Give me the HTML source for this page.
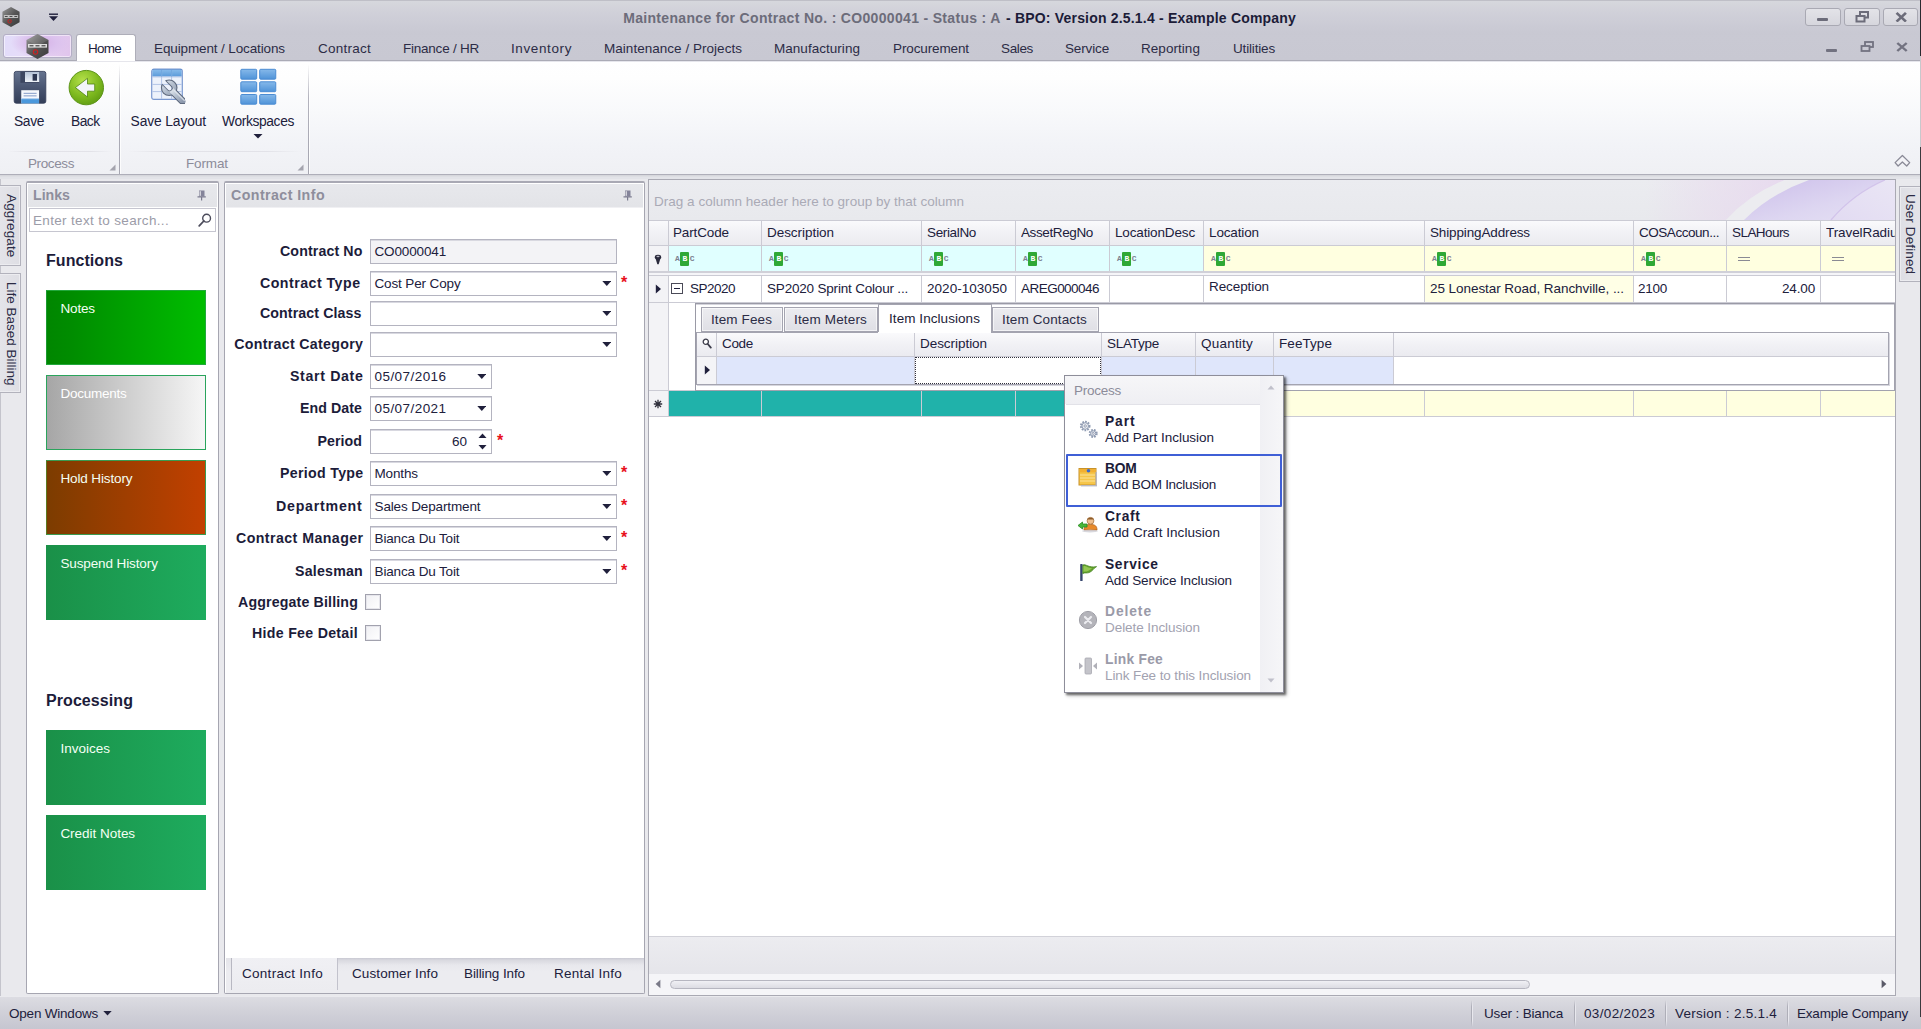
<!DOCTYPE html>
<html lang="en"><head><meta charset="utf-8"><title>Maintenance for Contract No. : CO0000041</title>
<style>
html,body{margin:0;padding:0;}
body{width:1921px;height:1029px;overflow:hidden;position:relative;background:#dfdfe5;font-family:"Liberation Sans", sans-serif;font-size:13.5px;color:#20203c;}
#app{position:absolute;left:0;top:0;width:1921px;height:1029px;overflow:hidden;}
#app div,#app svg{position:absolute;}
#app div.t{white-space:pre;}
#app span{position:static;}
</style></head><body><div id="app">
<div style="left:0px;top:0px;width:1921px;height:1029px;background:#e9e9ed;"></div>
<div style="left:0px;top:61px;width:1px;height:968px;background:#c4c4cc;"></div>
<div style="left:0px;top:0px;width:1921px;height:36px;background:linear-gradient(#d7d8dd 0,#d0d0d9 35%,#cacad4 80%,#c8c8d2 100%);"></div>
<div style="left:0px;top:0px;width:1921px;height:1px;background:#bfbfc7;"></div>
<div style="left:0px;top:35px;width:1921px;height:26px;background:linear-gradient(#c9c9d3,#c8c8d2);"></div>
<svg style="left:0.9px;top:6.2px" width="20" height="22" viewBox="0 0 21 23"><defs><linearGradient id="hx" x1="0" y1="0" x2="1" y2="1"><stop offset="0" stop-color="#9a9a9a"/><stop offset=".5" stop-color="#565656"/><stop offset="1" stop-color="#3a3a3a"/></linearGradient></defs><polygon points="10.5,1 19.5,6 19.5,17 10.5,22 1.5,17 1.5,6" fill="url(#hx)"/><rect x="3" y="9.5" width="15" height="3" fill="#d8d8d8" opacity=".85"/><rect x="4" y="10.5" width="3" height="1" fill="#444"/><rect x="9" y="10.5" width="3" height="1" fill="#444"/><rect x="14" y="10.5" width="3" height="1" fill="#444"/><circle cx="9" cy="16" r="1.8" fill="none" stroke="#d02020" stroke-width="1"/></svg>
<svg style="left:48px;top:13px" width="11" height="9" viewBox="0 0 11 9"><rect x="1" y="0.5" width="9" height="1.4" fill="#20203c"/><polygon points="1,3.2 10,3.2 5.5,8" fill="#20203c"/></svg>
<div class="t" style="top:7.699999999999999px;font-size:14px;line-height:20px;color:#6c6c7a;letter-spacing:0.322px;font-weight:bold;left:623.2px;">Maintenance for Contract No. : CO0000041 - Status : A</div>
<div class="t" style="top:7.699999999999999px;font-size:14px;line-height:20px;color:#1c1c38;letter-spacing:0.189px;font-weight:bold;left:1006px;">- BPO: Version 2.5.1.4 - Example Company</div>
<div style="left:1805px;top:8px;width:36px;height:18px;box-sizing:border-box;border:1px solid #a9a9b3;border-radius:3px;background:linear-gradient(#e3e3e8,#d6d6dd);"></div>
<div style="left:1844px;top:8px;width:36px;height:18px;box-sizing:border-box;border:1px solid #a9a9b3;border-radius:3px;background:linear-gradient(#e3e3e8,#d6d6dd);"></div>
<div style="left:1883px;top:8px;width:35px;height:18px;box-sizing:border-box;border:1px solid #a9a9b3;border-radius:3px;background:linear-gradient(#e3e3e8,#d6d6dd);"></div>
<div style="left:1817px;top:18px;width:11px;height:3px;background:#6c6c7a;border-radius:1px"></div>
<svg style="left:1854.5px;top:11px" width="15" height="12" viewBox="0 0 15 12"><rect x="5" y="1" width="8" height="5.5" fill="none" stroke="#6c6c7a" stroke-width="2"/><rect x="1.5" y="5" width="8" height="5.5" fill="#dcdce2" stroke="#6c6c7a" stroke-width="2"/></svg>
<svg style="left:1894.5px;top:11.5px" width="12.5" height="10.5" preserveAspectRatio="none" viewBox="0 0 12 11"><path d="M1.5 1 L10.5 10 M10.5 1 L1.5 10" stroke="#6c6c7a" stroke-width="2.6"/></svg>
<div style="left:1826px;top:49px;width:11px;height:2.5px;background:#727280;border-radius:1px"></div>
<svg style="left:1860px;top:41px" width="15" height="12" viewBox="0 0 15 12"><rect x="5" y="1" width="8" height="5" fill="none" stroke="#727280" stroke-width="1.8"/><rect x="1.5" y="5" width="8" height="5" fill="#c9c9d3" stroke="#727280" stroke-width="1.8"/></svg>
<svg style="left:1896px;top:42px" width="12" height="10" viewBox="0 0 11 10" preserveAspectRatio="none"><path d="M1.2 1 L9.8 9 M9.8 1 L1.2 9" stroke="#727280" stroke-width="2.3"/></svg>
<div style="left:3px;top:34px;width:69px;height:24px;box-sizing:border-box;border:1px solid #b4aec6;border-radius:3px;background:radial-gradient(ellipse 60% 90% at 55% 35%,#d6b2e6 0,#dcc2ee 40%,rgba(222,204,242,0) 75%),linear-gradient(100deg,#e2dcfa 0,#e6dcf8 30%,#e4cdf0 70%,#e0c4ec 100%);box-shadow:inset 0 0 0 1px rgba(255,255,255,.5);"></div>
<svg style="left:25px;top:32.5px" width="25" height="27" viewBox="0 0 25 27"><polygon points="12.5,1 23.5,7 23.5,20 12.5,26 1.5,20 1.5,7" fill="url(#hx)"/><polygon points="12.5,1 23.5,7 12.5,13 1.5,7" fill="#fff" opacity=".12"/><rect x="3" y="11" width="19" height="3.6" fill="#ececec" opacity=".92"/><rect x="4.5" y="12.2" width="4" height="1.2" fill="#444"/><rect x="10.5" y="12.2" width="4" height="1.2" fill="#444"/><rect x="16.5" y="12.2" width="4" height="1.2" fill="#444"/><circle cx="10.5" cy="19" r="2.2" fill="none" stroke="#d02020" stroke-width="1.1"/></svg>
<div style="left:0px;top:61px;width:1921px;height:113px;background:linear-gradient(#ffffff 0,#fefefe 15%,#f8f9fb 45%,#f2f3f7 75%,#eff0f4 100%);"></div>
<div style="left:0px;top:174px;width:1921px;height:1px;background:#aeaeb9;"></div>
<div style="left:0px;top:175px;width:1921px;height:1px;background:#d6d7dc;"></div>
<div style="left:0px;top:176px;width:1921px;height:1px;background:#dddee3;"></div>
<div style="left:0px;top:177px;width:1921px;height:2px;background:#e2e3e8;"></div>
<div style="left:0px;top:60px;width:1921px;height:1px;background:#ababb6;"></div>
<div style="left:0px;top:61px;width:1921px;height:1px;background:#e6e6ec;"></div>
<div style="left:76px;top:34px;width:60px;height:27px;box-sizing:border-box;border:1px solid #aeaeb9;border-bottom:none;border-radius:3px 3px 0 0;background:#fff;"></div>
<div class="t" style="top:38.5px;font-size:13.5px;line-height:20px;color:#1e1e3c;letter-spacing:-0.754px;left:88px;">Home</div>
<div class="t" style="top:38.5px;font-size:13.5px;line-height:20px;color:#2c2c46;letter-spacing:-0.124px;left:154px;">Equipment / Locations</div>
<div class="t" style="top:38.5px;font-size:13.5px;line-height:20px;color:#2c2c46;letter-spacing:0.246px;left:318px;">Contract</div>
<div class="t" style="top:38.5px;font-size:13.5px;line-height:20px;color:#2c2c46;letter-spacing:-0.232px;left:403px;">Finance / HR</div>
<div class="t" style="top:38.5px;font-size:13.5px;line-height:20px;color:#2c2c46;letter-spacing:0.608px;left:511px;">Inventory</div>
<div class="t" style="top:38.5px;font-size:13.5px;line-height:20px;color:#2c2c46;letter-spacing:0.031px;left:604px;">Maintenance / Projects</div>
<div class="t" style="top:38.5px;font-size:13.5px;line-height:20px;color:#2c2c46;letter-spacing:0.034px;left:774px;">Manufacturing</div>
<div class="t" style="top:38.5px;font-size:13.5px;line-height:20px;color:#2c2c46;letter-spacing:-0.118px;left:893px;">Procurement</div>
<div class="t" style="top:38.5px;font-size:13.5px;line-height:20px;color:#2c2c46;letter-spacing:-0.356px;left:1001px;">Sales</div>
<div class="t" style="top:38.5px;font-size:13.5px;line-height:20px;color:#2c2c46;letter-spacing:-0.145px;left:1065px;">Service</div>
<div class="t" style="top:38.5px;font-size:13.5px;line-height:20px;color:#2c2c46;letter-spacing:0.05px;left:1141px;">Reporting</div>
<div class="t" style="top:38.5px;font-size:13.5px;line-height:20px;color:#2c2c46;letter-spacing:-0.168px;left:1233px;">Utilities</div>
<div style="left:119px;top:64px;width:1px;height:110px;background:linear-gradient(rgba(190,190,200,0),#b4b4be 30%,#aaaab5 70%,#a6a6b1);"></div>
<div style="left:120px;top:64px;width:1px;height:110px;background:rgba(255,255,255,.8);"></div>
<div style="left:308px;top:64px;width:1px;height:110px;background:linear-gradient(rgba(190,190,200,0),#b4b4be 30%,#aaaab5 70%,#a6a6b1);"></div>
<div style="left:309px;top:64px;width:1px;height:110px;background:rgba(255,255,255,.8);"></div>
<div style="left:8px;top:151px;width:104px;height:1px;background:linear-gradient(90deg,rgba(220,220,228,0),#e2e2e8 20%,#e2e2e8 80%,rgba(220,220,228,0));"></div>
<div style="left:128px;top:151px;width:174px;height:1px;background:linear-gradient(90deg,rgba(220,220,228,0),#e2e2e8 20%,#e2e2e8 80%,rgba(220,220,228,0));"></div>
<div class="t" style="top:153.5px;font-size:13.5px;line-height:20px;color:#8c8c9a;letter-spacing:-0.397px;left:28px;">Process</div>
<div class="t" style="top:153.5px;font-size:13.5px;line-height:20px;color:#8c8c9a;letter-spacing:-0.128px;left:186px;">Format</div>
<svg style="left:109px;top:164px" width="7" height="7" viewBox="0 0 7 7"><polygon points="6.5,0.5 6.5,6.5 0.5,6.5" fill="#a4a4ae"/></svg>
<svg style="left:297px;top:164px" width="7" height="7" viewBox="0 0 7 7"><polygon points="6.5,0.5 6.5,6.5 0.5,6.5" fill="#a4a4ae"/></svg>
<div class="t" style="top:111.5px;font-size:13.8px;line-height:20px;color:#20203c;letter-spacing:-0.363px;left:-271px;width:600px;text-align:center;">Save</div>
<div class="t" style="top:111.5px;font-size:13.8px;line-height:20px;color:#20203c;letter-spacing:-0.547px;left:-214.7px;width:600px;text-align:center;">Back</div>
<div class="t" style="top:111.5px;font-size:13.8px;line-height:20px;color:#20203c;letter-spacing:-0.111px;left:-131.7px;width:600px;text-align:center;">Save Layout</div>
<div class="t" style="top:111.5px;font-size:13.8px;line-height:20px;color:#20203c;letter-spacing:-0.366px;left:-42px;width:600px;text-align:center;">Workspaces</div>
<svg style="left:253px;top:134px" width="10" height="5" viewBox="0 0 10 5"><polygon points="0.5,0 9.5,0 5,4.6" fill="#20203c"/></svg>
<svg style="left:1894px;top:154px" width="18" height="14" viewBox="0 0 18 14"><path d="M8.4 1.5 L15.7 8.6 L12.7 12 L8.4 8 L4.1 12 L1.1 8.6 Z" fill="#f3f3f7" stroke="#8a8a97" stroke-width="1.3" stroke-linejoin="round"/></svg>
<svg style="left:13px;top:70px" width="34" height="35" viewBox="0 0 34 35">
<defs><linearGradient id="sv" x1="0" y1="0" x2="0" y2="1"><stop offset="0" stop-color="#66748f"/><stop offset=".5" stop-color="#4a5672"/><stop offset="1" stop-color="#333e58"/></linearGradient>
<linearGradient id="svm" x1="0" y1="0" x2="0" y2="1"><stop offset="0" stop-color="#b4c2d6"/><stop offset="1" stop-color="#eef2f8"/></linearGradient></defs>
<rect x="1.2" y="1.4" width="31.6" height="31.8" rx="2" fill="url(#sv)" stroke="#38425c" stroke-width=".9"/>
<rect x="7.4" y="1.6" width="18.8" height="11.2" fill="#3c4660"/><rect x="12" y="2" width="14.2" height="10" fill="url(#svm)"/><rect x="19.6" y="4" width="4.4" height="6.7" fill="#2c3650"/>
<rect x="8.25" y="20.2" width="17.8" height="13.2" fill="#f6f8fc"/><rect x="8.25" y="29" width="17.8" height="4.4" fill="#4a98dc"/><rect x="8.25" y="28.2" width="17.8" height="1" fill="#a4c8ec"/>
<rect x="10.6" y="22.8" width="13" height="1.1" fill="#8fa4cc"/><rect x="10.6" y="25.3" width="13" height="1.1" fill="#8fa4cc"/>
</svg>
<svg style="left:68px;top:69px" width="37" height="38" viewBox="0 0 37 38">
<defs><radialGradient id="bk" cx=".4" cy=".3" r=".8"><stop offset="0" stop-color="#b4e04a"/><stop offset=".6" stop-color="#7cb81e"/><stop offset="1" stop-color="#5a9610"/></radialGradient></defs>
<circle cx="18.3" cy="18.6" r="17.2" fill="url(#bk)" stroke="#5c9418" stroke-width="1"/>
<path d="M7.4 18.6 L19.5 9.3 L19.5 15 L26.7 15 L26.7 22.2 L19.5 22.2 L19.5 28 Z" fill="#f2f5f8" stroke="#4e8410" stroke-width=".8" stroke-linejoin="round"/></svg>
<svg style="left:150px;top:68px" width="40" height="40" viewBox="0 0 40 40">
<defs><linearGradient id="slh" x1="0" y1="0" x2="0" y2="1"><stop offset="0" stop-color="#86baea"/><stop offset="1" stop-color="#5a9ad9"/></linearGradient>
<linearGradient id="wr" x1="0" y1="0" x2="1" y2="1"><stop offset="0" stop-color="#e0e6ee"/><stop offset=".5" stop-color="#b4bfce"/><stop offset="1" stop-color="#8d99ad"/></linearGradient>
<mask id="wm1"><rect width="40" height="40" fill="#fff"/><path d="M19.6 20.2 L10 10.6" stroke="#000" stroke-width="4.2" stroke-linecap="round"/></mask>
<mask id="wm2"><rect width="40" height="40" fill="#fff"/><path d="M19.6 20.2 L10 10.6" stroke="#000" stroke-width="6" stroke-linecap="round"/></mask></defs>
<rect x="1.7" y="1.2" width="30.6" height="30.2" rx="2.2" fill="#edf2fb" stroke="#7a98d0" stroke-width="1.2"/>
<path d="M2.3 3.2 Q2.3 1.8 3.7 1.8 H30.3 Q31.7 1.8 31.7 3.2 V8.6 H2.3 Z" fill="url(#slh)"/>
<path d="M2.3 1.6 H31.7" stroke="#4e88cc" stroke-width=".8" opacity=".7"/>
<path d="M2.3 8.9 H31.7 M2.3 16.4 H31.7 M2.3 23.6 H31.7" stroke="#b2c4e6" stroke-width="1"/><path d="M11.6 2 V30.8 M21.6 2 V30.8" stroke="#b2c4e6" stroke-width="1"/>
<path d="M11.6 2 V8.6 M21.6 2 V8.6" stroke="#6ea6de" stroke-width="1"/>
<g mask="url(#wm1)"><circle cx="19.2" cy="19.8" r="8.3" fill="#5f6a7e"/><path d="M21 21.6 L32.8 33.4" stroke="#5f6a7e" stroke-width="7.4" stroke-linecap="round"/></g>
<g mask="url(#wm2)"><circle cx="19.2" cy="19.8" r="7.2" fill="url(#wr)"/><path d="M21 21.6 L32.8 33.4" stroke="url(#wr)" stroke-width="5.4" stroke-linecap="round"/><path d="M24.4 22.6 L34.2 32.4" stroke="#e8edf3" stroke-width="1.3" stroke-linecap="round" opacity=".75"/></g>
</svg>
<svg style="left:239px;top:68px" width="39" height="38" viewBox="0 0 39 38"><defs><linearGradient id="wk" x1="0" y1="0" x2="0" y2="1"><stop offset="0" stop-color="#86b9ea"/><stop offset="1" stop-color="#4f93d8"/></linearGradient></defs><rect x="1.8" y="1.3" width="15.899999999999999" height="9.9" rx="1" fill="url(#wk)" stroke="#4b8cd3" stroke-width="1"/><rect x="20.7" y="1.3" width="16.05" height="9.9" rx="1" fill="url(#wk)" stroke="#4b8cd3" stroke-width="1"/><rect x="1.8" y="13.8" width="15.899999999999999" height="9.9" rx="1" fill="url(#wk)" stroke="#4b8cd3" stroke-width="1"/><rect x="20.7" y="13.8" width="16.05" height="9.9" rx="1" fill="url(#wk)" stroke="#4b8cd3" stroke-width="1"/><rect x="1.8" y="26.5" width="15.899999999999999" height="9.7" rx="1" fill="url(#wk)" stroke="#4b8cd3" stroke-width="1"/><rect x="20.7" y="26.5" width="16.05" height="9.7" rx="1" fill="url(#wk)" stroke="#4b8cd3" stroke-width="1"/></svg>
<div style="left:0px;top:185px;width:21px;height:81px;box-sizing:border-box;border:1px solid #b2b2bc;border-left:none;background:linear-gradient(90deg,#e4e4e9,#dedee4);box-shadow:inset -1px 0 0 #ececf0,inset 0 1px 0 #ececf0,inset 0 -1px 0 #ececf0;"></div>
<div class="t" style="left:10.5px;top:193.5px;width:0;height:0;"><div class="t" style="left:0;top:-10px;line-height:20px;font-size:13.5px;color:#2a2a44;transform-origin:0 10px;transform:rotate(90deg);letter-spacing:0.13px">Aggregate</div></div>
<div style="left:0px;top:273px;width:21px;height:120px;box-sizing:border-box;border:1px solid #b2b2bc;border-left:none;background:linear-gradient(90deg,#e4e4e9,#dedee4);box-shadow:inset -1px 0 0 #ececf0,inset 0 1px 0 #ececf0,inset 0 -1px 0 #ececf0;"></div>
<div class="t" style="left:10.5px;top:281.5px;width:0;height:0;"><div class="t" style="left:0;top:-10px;line-height:20px;font-size:13.5px;color:#2a2a44;transform-origin:0 10px;transform:rotate(90deg);letter-spacing:0.0px">Life Based Billing</div></div>
<div style="left:1899px;top:186px;width:22px;height:96px;box-sizing:border-box;border:1px solid #b2b2bc;border-right:none;background:linear-gradient(90deg,#dedee4,#e4e4e9);box-shadow:inset 1px 0 0 #ececf0,inset 0 1px 0 #ececf0,inset 0 -1px 0 #ececf0;"></div>
<div class="t" style="left:1910.3px;top:193.5px;width:0;height:0;"><div class="t" style="left:0;top:-10px;line-height:20px;font-size:13.5px;color:#2a2a44;transform-origin:0 10px;transform:rotate(90deg);letter-spacing:0.12px">User Defined</div></div>
<div style="left:26px;top:181px;width:193px;height:813px;box-sizing:border-box;border:1px solid #a6a6b1;border-top:2px solid #a9a9b4;border-radius:2px;background:#fff;"></div>
<div style="left:28px;top:184px;width:189px;height:23px;background:linear-gradient(#e7e8ec,#e3e4e8);"></div>
<div class="t" style="top:185.0px;font-size:14.2px;line-height:20px;color:#8e8e9c;letter-spacing:-0.013px;font-weight:bold;left:33px;">Links</div>
<svg style="left:197px;top:190px" width="9" height="11" viewBox="0 0 9 11"><rect x="2" y="0.5" width="5.5" height="6" fill="#84849a"/><rect x="2.6" y="1.2" width="1.2" height="4.6" fill="#e8e8ec"/><path d="M0.5 6.8 H8.8 M4.6 7 V10.4" stroke="#7c7c90" stroke-width="1.2"/></svg>
<div style="left:29px;top:208px;width:187px;height:24px;box-sizing:border-box;border:1px solid #c6c6d0;background:#fff;"></div>
<div class="t" style="top:210.5px;font-size:13.5px;line-height:20px;color:#9c9ca8;letter-spacing:0.334px;left:33px;">Enter text to search...</div>
<svg style="left:197.2px;top:212px" width="16" height="16" viewBox="0 0 16 16"><circle cx="9.6" cy="6.2" r="3.9" fill="none" stroke="#4c4c5c" stroke-width="1.4"/><path d="M6.8 9 L2.2 13.8" stroke="#4c4c5c" stroke-width="1.8" stroke-linecap="round"/></svg>
<div class="t" style="top:250.5px;font-size:16px;line-height:20px;color:#1c1c3a;letter-spacing:0.062px;font-weight:bold;left:46px;">Functions</div>
<div class="t" style="top:690.5px;font-size:16px;line-height:20px;color:#1c1c3a;letter-spacing:0.073px;font-weight:bold;left:46px;">Processing</div>
<div style="left:46px;top:290px;width:160px;height:75px;background:linear-gradient(90deg,#008600,#008c00 15%,#00be00);box-sizing:border-box;border:1px solid #22a83c;border-left-color:#1a9a2e;"></div>
<div class="t" style="top:298.5px;font-size:13.5px;line-height:20px;color:#f4fff4;letter-spacing:-0.136px;left:60.4px;">Notes</div>
<div style="left:46px;top:375px;width:160px;height:75px;background:linear-gradient(90deg,#a6a6a6,#f6f6f6);box-sizing:border-box;border:1px solid #2aa45c;"></div>
<div class="t" style="top:383.5px;font-size:13.5px;line-height:20px;color:#ffffff;letter-spacing:-0.253px;left:60.4px;">Documents</div>
<div style="left:46px;top:460px;width:160px;height:75px;background:linear-gradient(90deg,#7c3c00,#c24000);box-sizing:border-box;border:1px solid #3a9a50;border-left-color:#5a7a20;"></div>
<div class="t" style="top:468.5px;font-size:13.5px;line-height:20px;color:#f4fff4;letter-spacing:-0.128px;left:60.4px;">Hold History</div>
<div style="left:46px;top:545px;width:160px;height:75px;background:linear-gradient(90deg,#1a9048,#1eac5e);"></div>
<div class="t" style="top:553.5px;font-size:13.5px;line-height:20px;color:#f4fff4;letter-spacing:-0.111px;left:60.4px;">Suspend History</div>
<div style="left:46px;top:730px;width:160px;height:75px;background:linear-gradient(90deg,#1a9048,#1eac5e);"></div>
<div class="t" style="top:738.5px;font-size:13.5px;line-height:20px;color:#f4fff4;letter-spacing:0.021px;left:60.4px;">Invoices</div>
<div style="left:46px;top:815px;width:160px;height:75px;background:linear-gradient(90deg,#1a9048,#1eac5e);"></div>
<div class="t" style="top:823.5px;font-size:13.5px;line-height:20px;color:#f4fff4;letter-spacing:-0.028px;left:60.4px;">Credit Notes</div>
<div style="left:224px;top:181px;width:421px;height:813px;box-sizing:border-box;border:1px solid #a6a6b1;border-top:2px solid #a9a9b4;border-radius:2px;background:#fff;"></div>
<div style="left:226px;top:184px;width:417px;height:23px;background:linear-gradient(#e7e8ec,#e3e4e8);"></div>
<div style="left:226px;top:207px;width:417px;height:1px;background:#f0f0f3;"></div>
<div class="t" style="top:185.0px;font-size:14.2px;line-height:20px;color:#8e8e9c;letter-spacing:0.44px;font-weight:bold;left:231px;">Contract Info</div>
<svg style="left:623.3px;top:190px" width="9" height="11" viewBox="0 0 9 11"><rect x="2" y="0.5" width="5.5" height="6" fill="#84849a"/><rect x="2.6" y="1.2" width="1.2" height="4.6" fill="#e8e8ec"/><path d="M0.5 6.8 H8.8 M4.6 7 V10.4" stroke="#7c7c90" stroke-width="1.2"/></svg>
<div class="t" style="top:240.5px;font-size:14.2px;line-height:20px;color:#1c1c3a;letter-spacing:0.119px;font-weight:bold;left:280px;">Contract No</div>
<div style="left:370px;top:239px;width:247px;height:25px;box-sizing:border-box;border:1px solid #b4b4c0;background:#f3f3f6;box-shadow:inset 0 1px 0 #d8d8e0;"></div>
<div class="t" style="top:241.5px;font-size:13.5px;line-height:20px;color:#20203c;letter-spacing:-0.146px;left:374.5px;">CO0000041</div>
<div class="t" style="top:272.5px;font-size:14.2px;line-height:20px;color:#1c1c3a;letter-spacing:0.474px;font-weight:bold;left:260px;">Contract Type</div>
<div style="left:370px;top:271px;width:247px;height:25px;box-sizing:border-box;border:1px solid #b4b4c0;background:#fff;box-shadow:inset 0 1px 0 #d8d8e0;"></div>
<div class="t" style="top:273.5px;font-size:13.5px;line-height:20px;color:#20203c;letter-spacing:-0.138px;left:374.5px;">Cost Per Copy</div>
<svg style="left:601.6px;top:280.9px" width="9.6" height="5.4" viewBox="0 0 9 5"><polygon points="0.3,0 8.7,0 4.5,4.6" fill="#20203c"/></svg>
<div class="t" style="left:618px;top:272.5px;width:12px;text-align:center;font-size:16px;line-height:20px;color:#e8101c;font-weight:bold">*</div>
<div class="t" style="top:302.5px;font-size:14.2px;line-height:20px;color:#1c1c3a;letter-spacing:0.097px;font-weight:bold;left:260px;">Contract Class</div>
<div style="left:370px;top:301px;width:247px;height:25px;box-sizing:border-box;border:1px solid #b4b4c0;background:#fff;box-shadow:inset 0 1px 0 #d8d8e0;"></div>
<svg style="left:601.6px;top:310.9px" width="9.6" height="5.4" viewBox="0 0 9 5"><polygon points="0.3,0 8.7,0 4.5,4.6" fill="#20203c"/></svg>
<div class="t" style="top:333.5px;font-size:14.2px;line-height:20px;color:#1c1c3a;letter-spacing:0.307px;font-weight:bold;left:234.2px;">Contract Category</div>
<div style="left:370px;top:332px;width:247px;height:25px;box-sizing:border-box;border:1px solid #b4b4c0;background:#fff;box-shadow:inset 0 1px 0 #d8d8e0;"></div>
<svg style="left:601.6px;top:341.9px" width="9.6" height="5.4" viewBox="0 0 9 5"><polygon points="0.3,0 8.7,0 4.5,4.6" fill="#20203c"/></svg>
<div class="t" style="top:365.5px;font-size:14.2px;line-height:20px;color:#1c1c3a;letter-spacing:0.647px;font-weight:bold;left:290px;">Start Date</div>
<div style="left:370px;top:364px;width:122px;height:25px;box-sizing:border-box;border:1px solid #b4b4c0;background:#fff;box-shadow:inset 0 1px 0 #d8d8e0;"></div>
<div class="t" style="top:366.5px;font-size:13.5px;line-height:20px;color:#20203c;letter-spacing:0.442px;left:374.5px;">05/07/2016</div>
<svg style="left:476.6px;top:373.9px" width="9.6" height="5.4" viewBox="0 0 9 5"><polygon points="0.3,0 8.7,0 4.5,4.6" fill="#20203c"/></svg>
<div class="t" style="top:397.5px;font-size:14.2px;line-height:20px;color:#1c1c3a;letter-spacing:0.062px;font-weight:bold;left:300px;">End Date</div>
<div style="left:370px;top:396px;width:122px;height:25px;box-sizing:border-box;border:1px solid #b4b4c0;background:#fff;box-shadow:inset 0 1px 0 #d8d8e0;"></div>
<div class="t" style="top:398.5px;font-size:13.5px;line-height:20px;color:#20203c;letter-spacing:0.442px;left:374.5px;">05/07/2021</div>
<svg style="left:476.6px;top:405.9px" width="9.6" height="5.4" viewBox="0 0 9 5"><polygon points="0.3,0 8.7,0 4.5,4.6" fill="#20203c"/></svg>
<div class="t" style="top:430.5px;font-size:14.2px;line-height:20px;color:#1c1c3a;letter-spacing:0.057px;font-weight:bold;left:317.5px;">Period</div>
<div style="left:370px;top:429px;width:122px;height:25px;box-sizing:border-box;border:1px solid #b4b4c0;background:#fff;box-shadow:inset 0 1px 0 #d8d8e0;"></div>
<div class="t" style="top:431.5px;font-size:13.5px;line-height:20px;color:#20203c;letter-spacing:-0.016px;right:1454px;">60</div>
<svg style="left:478px;top:433px" width="9" height="18" viewBox="0 0 9 18"><polygon points="0.5,5 8.5,5 4.5,0.6" fill="#20203c"/><polygon points="0.5,12 8.5,12 4.5,16.4" fill="#20203c"/></svg>
<div class="t" style="left:494px;top:430.5px;width:12px;text-align:center;font-size:16px;line-height:20px;color:#e8101c;font-weight:bold">*</div>
<div class="t" style="top:462.5px;font-size:14.2px;line-height:20px;color:#1c1c3a;letter-spacing:0.304px;font-weight:bold;left:280px;">Period Type</div>
<div style="left:370px;top:461px;width:247px;height:25px;box-sizing:border-box;border:1px solid #b4b4c0;background:#fff;box-shadow:inset 0 1px 0 #d8d8e0;"></div>
<div class="t" style="top:463.5px;font-size:13.5px;line-height:20px;color:#20203c;letter-spacing:-0.13px;left:374.5px;">Months</div>
<svg style="left:601.6px;top:470.9px" width="9.6" height="5.4" viewBox="0 0 9 5"><polygon points="0.3,0 8.7,0 4.5,4.6" fill="#20203c"/></svg>
<div class="t" style="left:618px;top:462.5px;width:12px;text-align:center;font-size:16px;line-height:20px;color:#e8101c;font-weight:bold">*</div>
<div class="t" style="top:495.5px;font-size:14.2px;line-height:20px;color:#1c1c3a;letter-spacing:0.766px;font-weight:bold;left:276px;">Department</div>
<div style="left:370px;top:494px;width:247px;height:25px;box-sizing:border-box;border:1px solid #b4b4c0;background:#fff;box-shadow:inset 0 1px 0 #d8d8e0;"></div>
<div class="t" style="top:496.5px;font-size:13.5px;line-height:20px;color:#20203c;letter-spacing:-0.129px;left:374.5px;">Sales Department</div>
<svg style="left:601.6px;top:503.9px" width="9.6" height="5.4" viewBox="0 0 9 5"><polygon points="0.3,0 8.7,0 4.5,4.6" fill="#20203c"/></svg>
<div class="t" style="left:618px;top:495.5px;width:12px;text-align:center;font-size:16px;line-height:20px;color:#e8101c;font-weight:bold">*</div>
<div class="t" style="top:527.5px;font-size:14.2px;line-height:20px;color:#1c1c3a;letter-spacing:0.43px;font-weight:bold;left:236px;">Contract Manager</div>
<div style="left:370px;top:526px;width:247px;height:25px;box-sizing:border-box;border:1px solid #b4b4c0;background:#fff;box-shadow:inset 0 1px 0 #d8d8e0;"></div>
<div class="t" style="top:528.5px;font-size:13.5px;line-height:20px;color:#20203c;letter-spacing:-0.129px;left:374.5px;">Bianca Du Toit</div>
<svg style="left:601.6px;top:535.9px" width="9.6" height="5.4" viewBox="0 0 9 5"><polygon points="0.3,0 8.7,0 4.5,4.6" fill="#20203c"/></svg>
<div class="t" style="left:618px;top:527.5px;width:12px;text-align:center;font-size:16px;line-height:20px;color:#e8101c;font-weight:bold">*</div>
<div class="t" style="top:560.5px;font-size:14.2px;line-height:20px;color:#1c1c3a;letter-spacing:0.219px;font-weight:bold;left:295px;">Salesman</div>
<div style="left:370px;top:559px;width:247px;height:25px;box-sizing:border-box;border:1px solid #b4b4c0;background:#fff;box-shadow:inset 0 1px 0 #d8d8e0;"></div>
<div class="t" style="top:561.5px;font-size:13.5px;line-height:20px;color:#20203c;letter-spacing:-0.129px;left:374.5px;">Bianca Du Toit</div>
<svg style="left:601.6px;top:568.9px" width="9.6" height="5.4" viewBox="0 0 9 5"><polygon points="0.3,0 8.7,0 4.5,4.6" fill="#20203c"/></svg>
<div class="t" style="left:618px;top:560.5px;width:12px;text-align:center;font-size:16px;line-height:20px;color:#e8101c;font-weight:bold">*</div>
<div class="t" style="top:592.0px;font-size:14.2px;line-height:20px;color:#1c1c3a;letter-spacing:0.15px;font-weight:bold;right:1563px;">Aggregate Billing</div>
<div class="t" style="top:623.0px;font-size:14.2px;line-height:20px;color:#1c1c3a;letter-spacing:0.285px;font-weight:bold;right:1563px;">Hide Fee Detail</div>
<div style="left:365px;top:594px;width:16px;height:16px;box-sizing:border-box;border:1px solid #a2a2ae;background:linear-gradient(135deg,#f0f0f4,#ffffff);box-shadow:inset 0 0 0 1px #e6e6ec;"></div>
<div style="left:365px;top:625px;width:16px;height:16px;box-sizing:border-box;border:1px solid #a2a2ae;background:linear-gradient(135deg,#f0f0f4,#ffffff);box-shadow:inset 0 0 0 1px #e6e6ec;"></div>
<div style="left:226px;top:958px;width:418px;height:35px;background:linear-gradient(#e4e4e9,#ececf0 40%,#ececf0);"></div>
<div style="left:338px;top:958px;width:306px;height:7px;background:linear-gradient(#c9c9d2,#d9d9e0 30%,rgba(232,232,237,0));"></div>
<div style="left:231px;top:958px;width:107px;height:32px;background:linear-gradient(#f0f0f4,#ececf0);border-left:1px solid #b8b8c2;border-right:1px solid #c2c2cc;box-sizing:border-box;"></div>
<div class="t" style="top:963.5px;font-size:13.5px;line-height:20px;color:#20203c;letter-spacing:0.285px;left:242px;">Contract Info</div>
<div class="t" style="top:963.5px;font-size:13.5px;line-height:20px;color:#20203c;letter-spacing:0.093px;left:352px;">Customer Info</div>
<div class="t" style="top:963.5px;font-size:13.5px;line-height:20px;color:#20203c;letter-spacing:-0.108px;left:464px;">Billing Info</div>
<div class="t" style="top:963.5px;font-size:13.5px;line-height:20px;color:#20203c;letter-spacing:0.246px;left:554px;">Rental Info</div>
<div style="left:648px;top:179px;width:1248px;height:817px;box-sizing:border-box;border:1px solid #a9a9b3;background:#fff;"></div>
<div style="left:649px;top:180px;width:1246px;height:40px;background:linear-gradient(#ebecf0,#e8e9ed);overflow:hidden;"><svg style="left:996px;top:0" width="250" height="40" viewBox="0 0 250 40"><defs><linearGradient id="sw0" x1="0" y1="0" x2="1" y2="0"><stop offset="0" stop-color="#e8d6ee" stop-opacity="0"/><stop offset=".45" stop-color="#e8d8ee" stop-opacity=".45"/><stop offset="1" stop-color="#e6d4ee" stop-opacity=".75"/></linearGradient><linearGradient id="sw1" x1="0" y1="0" x2="1" y2="1"><stop offset="0" stop-color="#c6b6e8"/><stop offset=".25" stop-color="#d3c8ed"/><stop offset=".6" stop-color="#ddd6f1"/><stop offset="1" stop-color="#e5e0f4"/></linearGradient><linearGradient id="sw2" x1="0" y1="1" x2="1" y2="0"><stop offset="0" stop-color="#e2dbf2"/><stop offset="1" stop-color="#eae6f5"/></linearGradient></defs><path d="M0 0 H140 Q105 14 81 40 H0 Z" fill="url(#sw0)"/><path d="M140 0 H164 Q125 14 99 40 H81 Q105 14 140 0 Z" fill="#ececf0"/><path d="M164 0 H240 Q208 14 186 40 H99 Q125 14 164 0 Z" fill="url(#sw1)"/><path d="M240 0 H250 V40 H186 Q208 14 240 0 Z" fill="url(#sw2)"/><path d="M240 0 Q208 14 186 40" fill="none" stroke="#cdbce9" stroke-width="1.2" opacity=".8"/></svg></div>
<div class="t" style="top:191.5px;font-size:13.5px;line-height:20px;color:#aaaab6;letter-spacing:0.017px;left:654px;">Drag a column header here to group by that column</div>
<div style="left:649px;top:220px;width:1246px;height:1px;background:#cbcbd4;"></div>
<div style="left:649px;top:221px;width:1246px;height:24px;background:linear-gradient(#fafafc,#f1f1f5 50%,#ebebf0);"></div>
<div style="left:649px;top:245px;width:1246px;height:1px;background:#cbcbd4;"></div>
<div style="left:668px;top:221px;width:1px;height:81px;background:#cbcbd4;"></div>
<div class="t" style="left:673px;top:222.5px;width:88px;overflow:hidden;line-height:20px;font-size:13.5px;color:#20203c;letter-spacing:-0.131px">PartCode</div>
<div style="left:761px;top:221px;width:1px;height:81px;background:#cbcbd4;"></div>
<div class="t" style="left:767px;top:222.5px;width:154px;overflow:hidden;line-height:20px;font-size:13.5px;color:#20203c;letter-spacing:-0.048px">Description</div>
<div style="left:921px;top:221px;width:1px;height:81px;background:#cbcbd4;"></div>
<div class="t" style="left:927px;top:222.5px;width:88px;overflow:hidden;line-height:20px;font-size:13.5px;color:#20203c;letter-spacing:-0.348px">SerialNo</div>
<div style="left:1015px;top:221px;width:1px;height:81px;background:#cbcbd4;"></div>
<div class="t" style="left:1021px;top:222.5px;width:88px;overflow:hidden;line-height:20px;font-size:13.5px;color:#20203c;letter-spacing:-0.38px">AssetRegNo</div>
<div style="left:1109px;top:221px;width:1px;height:81px;background:#cbcbd4;"></div>
<div class="t" style="left:1115px;top:222.5px;width:88px;overflow:hidden;line-height:20px;font-size:13.5px;color:#20203c;letter-spacing:-0.151px">LocationDesc</div>
<div style="left:1203px;top:221px;width:1px;height:81px;background:#cbcbd4;"></div>
<div class="t" style="left:1209px;top:222.5px;width:215px;overflow:hidden;line-height:20px;font-size:13.5px;color:#20203c;letter-spacing:-0.131px">Location</div>
<div style="left:1424px;top:221px;width:1px;height:81px;background:#cbcbd4;"></div>
<div class="t" style="left:1430px;top:222.5px;width:203px;overflow:hidden;line-height:20px;font-size:13.5px;color:#20203c;letter-spacing:-0.139px">ShippingAddress</div>
<div style="left:1633px;top:221px;width:1px;height:81px;background:#cbcbd4;"></div>
<div class="t" style="left:1639px;top:222.5px;width:87px;overflow:hidden;line-height:20px;font-size:13.5px;color:#20203c;letter-spacing:-0.462px">COSAccoun...</div>
<div style="left:1726px;top:221px;width:1px;height:81px;background:#cbcbd4;"></div>
<div class="t" style="left:1732px;top:222.5px;width:88px;overflow:hidden;line-height:20px;font-size:13.5px;color:#20203c;letter-spacing:-0.566px">SLAHours</div>
<div style="left:1820px;top:221px;width:1px;height:81px;background:#cbcbd4;"></div>
<div class="t" style="left:1826px;top:222.5px;width:69px;overflow:hidden;line-height:20px;font-size:13.5px;color:#20203c;letter-spacing:-0.086px">TravelRadius</div>
<div style="left:649px;top:246px;width:19px;height:25px;background:#f3f3f6;"></div>
<div style="left:669px;top:246px;width:535px;height:25px;background:#e0ffff;"></div>
<div style="left:1204px;top:246px;width:691px;height:25px;background:#ffffe0;"></div>
<div style="left:761px;top:246px;width:1px;height:25px;background:#cbcbd4;"></div>
<div style="left:921px;top:246px;width:1px;height:25px;background:#cbcbd4;"></div>
<div style="left:1015px;top:246px;width:1px;height:25px;background:#cbcbd4;"></div>
<div style="left:1109px;top:246px;width:1px;height:25px;background:#cbcbd4;"></div>
<div style="left:1203px;top:246px;width:1px;height:25px;background:#cbcbd4;"></div>
<div style="left:1424px;top:246px;width:1px;height:25px;background:#cbcbd4;"></div>
<div style="left:1633px;top:246px;width:1px;height:25px;background:#cbcbd4;"></div>
<div style="left:1726px;top:246px;width:1px;height:25px;background:#cbcbd4;"></div>
<div style="left:1820px;top:246px;width:1px;height:25px;background:#cbcbd4;"></div>
<div style="left:668px;top:246px;width:1px;height:25px;background:#cbcbd4;"></div>
<div class="t" style="left:675px;top:252.4px;font-size:8px;line-height:14px;font-weight:bold;color:#7c8090;font-family:'Liberation Mono',monospace;letter-spacing:0"><span>A</span><span style="display:inline-block;width:9px;height:14px;background:#2fa836;color:#fff;text-align:center;border-radius:1px;vertical-align:top;margin:0 0.5px">B</span><span>C</span></div>
<div class="t" style="left:769px;top:252.4px;font-size:8px;line-height:14px;font-weight:bold;color:#7c8090;font-family:'Liberation Mono',monospace;letter-spacing:0"><span>A</span><span style="display:inline-block;width:9px;height:14px;background:#2fa836;color:#fff;text-align:center;border-radius:1px;vertical-align:top;margin:0 0.5px">B</span><span>C</span></div>
<div class="t" style="left:929px;top:252.4px;font-size:8px;line-height:14px;font-weight:bold;color:#7c8090;font-family:'Liberation Mono',monospace;letter-spacing:0"><span>A</span><span style="display:inline-block;width:9px;height:14px;background:#2fa836;color:#fff;text-align:center;border-radius:1px;vertical-align:top;margin:0 0.5px">B</span><span>C</span></div>
<div class="t" style="left:1023px;top:252.4px;font-size:8px;line-height:14px;font-weight:bold;color:#7c8090;font-family:'Liberation Mono',monospace;letter-spacing:0"><span>A</span><span style="display:inline-block;width:9px;height:14px;background:#2fa836;color:#fff;text-align:center;border-radius:1px;vertical-align:top;margin:0 0.5px">B</span><span>C</span></div>
<div class="t" style="left:1117px;top:252.4px;font-size:8px;line-height:14px;font-weight:bold;color:#7c8090;font-family:'Liberation Mono',monospace;letter-spacing:0"><span>A</span><span style="display:inline-block;width:9px;height:14px;background:#2fa836;color:#fff;text-align:center;border-radius:1px;vertical-align:top;margin:0 0.5px">B</span><span>C</span></div>
<div class="t" style="left:1211px;top:252.4px;font-size:8px;line-height:14px;font-weight:bold;color:#7c8090;font-family:'Liberation Mono',monospace;letter-spacing:0"><span>A</span><span style="display:inline-block;width:9px;height:14px;background:#2fa836;color:#fff;text-align:center;border-radius:1px;vertical-align:top;margin:0 0.5px">B</span><span>C</span></div>
<div class="t" style="left:1432px;top:252.4px;font-size:8px;line-height:14px;font-weight:bold;color:#7c8090;font-family:'Liberation Mono',monospace;letter-spacing:0"><span>A</span><span style="display:inline-block;width:9px;height:14px;background:#2fa836;color:#fff;text-align:center;border-radius:1px;vertical-align:top;margin:0 0.5px">B</span><span>C</span></div>
<div class="t" style="left:1641px;top:252.4px;font-size:8px;line-height:14px;font-weight:bold;color:#7c8090;font-family:'Liberation Mono',monospace;letter-spacing:0"><span>A</span><span style="display:inline-block;width:9px;height:14px;background:#2fa836;color:#fff;text-align:center;border-radius:1px;vertical-align:top;margin:0 0.5px">B</span><span>C</span></div>
<div style="left:1738px;top:257px;width:12px;height:1px;background:#8a8a94;"></div>
<div style="left:1738px;top:260px;width:12px;height:1px;background:#8a8a94;"></div>
<div style="left:1832px;top:257px;width:12px;height:1px;background:#8a8a94;"></div>
<div style="left:1832px;top:260px;width:12px;height:1px;background:#8a8a94;"></div>
<svg style="left:654px;top:254px" width="9" height="11" viewBox="0 0 9 11"><ellipse cx="4" cy="3.2" rx="3.2" ry="2.4" fill="#2a2a3c"/><polygon points="1.6,4.4 6.4,4.4 4.7,10.3 3.3,10.3" fill="#2a2a3c"/><ellipse cx="4" cy="2.5" rx="1.6" ry=".7" fill="#b8b8c4"/></svg>
<div style="left:649px;top:271px;width:1246px;height:2px;background:#d0d0d8;"></div>
<div style="left:649px;top:273px;width:1246px;height:2px;background:#f5f5f8;"></div>
<div style="left:649px;top:275px;width:1246px;height:1px;background:#cbcbd4;"></div>
<div style="left:649px;top:276px;width:19px;height:26px;background:#f3f3f6;"></div>
<div style="left:668px;top:276px;width:1px;height:26px;background:#cbcbd4;"></div>
<div style="left:1425px;top:276px;width:208px;height:26px;background:#ffffe6;"></div>
<div style="left:761px;top:276px;width:1px;height:26px;background:#cbcbd4;"></div>
<div style="left:921px;top:276px;width:1px;height:26px;background:#cbcbd4;"></div>
<div style="left:1015px;top:276px;width:1px;height:26px;background:#cbcbd4;"></div>
<div style="left:1109px;top:276px;width:1px;height:26px;background:#cbcbd4;"></div>
<div style="left:1203px;top:276px;width:1px;height:26px;background:#cbcbd4;"></div>
<div style="left:1424px;top:276px;width:1px;height:26px;background:#cbcbd4;"></div>
<div style="left:1633px;top:276px;width:1px;height:26px;background:#cbcbd4;"></div>
<div style="left:1726px;top:276px;width:1px;height:26px;background:#cbcbd4;"></div>
<div style="left:1820px;top:276px;width:1px;height:26px;background:#cbcbd4;"></div>
<div style="left:649px;top:302px;width:1246px;height:1px;background:#cbcbd4;"></div>
<svg style="left:655px;top:284px" width="7" height="10" viewBox="0 0 7 10"><polygon points="0.8,0.6 6,5 0.8,9.4" fill="#20203c"/></svg>
<div style="left:671px;top:283px;width:12px;height:11px;box-sizing:border-box;border:1px solid #4a4a58;background:#fff;"></div>
<div style="left:674px;top:288px;width:6px;height:1px;background:#20203c;"></div>
<div class="t" style="top:278.5px;font-size:13.5px;line-height:20px;color:#20203c;letter-spacing:-0.508px;left:690px;">SP2020</div>
<div class="t" style="top:278.5px;font-size:13.5px;line-height:20px;color:#20203c;letter-spacing:-0.191px;left:767px;">SP2020 Sprint Colour ...</div>
<div class="t" style="top:278.5px;font-size:13.5px;line-height:20px;color:#20203c;letter-spacing:0.038px;left:927px;">2020-103050</div>
<div class="t" style="top:278.5px;font-size:13.5px;line-height:20px;color:#20203c;letter-spacing:-0.531px;left:1021px;">AREG000046</div>
<div class="t" style="top:276.5px;font-size:13.5px;line-height:20px;color:#20203c;letter-spacing:-0.089px;left:1209px;">Reception</div>
<div class="t" style="top:278.5px;font-size:13.5px;line-height:20px;color:#20203c;letter-spacing:-0.057px;left:1430px;">25 Lonestar Road, Ranchville, ...</div>
<div class="t" style="top:278.5px;font-size:13.5px;line-height:20px;color:#20203c;letter-spacing:-0.262px;left:1638px;">2100</div>
<div class="t" style="top:278.5px;font-size:13.5px;line-height:20px;color:#20203c;letter-spacing:-0.159px;right:106px;">24.00</div>
<div style="left:649px;top:303px;width:19px;height:88px;background:#f3f3f6;"></div>
<div style="left:668px;top:303px;width:1px;height:88px;background:#cbcbd4;"></div>
<div style="left:695px;top:303px;width:1200px;height:1px;background:#9a9aa6;"></div>
<div style="left:695px;top:303px;width:1px;height:88px;background:#9a9aa6;"></div>
<div style="left:696px;top:304px;width:1199px;height:1px;background:#d4d4dc;"></div>
<div style="left:701px;top:307px;width:82px;height:25px;box-sizing:border-box;border:1px solid #a4a4b0;background:linear-gradient(#ececf0,#dfdfe5);box-shadow:inset 0 0 0 1px rgba(255,255,255,.6);"></div>
<div style="left:784px;top:307px;width:94px;height:25px;box-sizing:border-box;border:1px solid #a4a4b0;background:linear-gradient(#ececf0,#dfdfe5);box-shadow:inset 0 0 0 1px rgba(255,255,255,.6);"></div>
<div style="left:992px;top:307px;width:107px;height:25px;box-sizing:border-box;border:1px solid #a4a4b0;background:linear-gradient(#ececf0,#dfdfe5);box-shadow:inset 0 0 0 1px rgba(255,255,255,.6);"></div>
<div style="left:878px;top:304px;width:114px;height:29px;box-sizing:border-box;border:1px solid #a4a4b0;border-bottom:none;background:#fff;"></div>
<div class="t" style="top:310.0px;font-size:13.5px;line-height:20px;color:#2c2c46;letter-spacing:0.108px;left:711px;">Item Fees</div>
<div class="t" style="top:310.0px;font-size:13.5px;line-height:20px;color:#2c2c46;letter-spacing:0.158px;left:794px;">Item Meters</div>
<div class="t" style="top:309.0px;font-size:13.5px;line-height:20px;color:#1c1c38;letter-spacing:0.064px;left:889px;">Item Inclusions</div>
<div class="t" style="top:310.0px;font-size:13.5px;line-height:20px;color:#2c2c46;letter-spacing:0.132px;left:1002px;">Item Contacts</div>
<div style="left:696px;top:332px;width:1193px;height:53px;box-sizing:border-box;border:1px solid #a4a4b0;background:#fff;box-shadow:1px 1px 0 #d6d6de;"></div>
<div style="left:878px;top:332px;width:113px;height:1px;background:#fff;"></div>
<div style="left:697px;top:333px;width:1191px;height:23px;background:linear-gradient(#fafafc,#f1f1f5 50%,#ebebf0);"></div>
<div style="left:697px;top:356px;width:1191px;height:1px;background:#cbcbd4;"></div>
<div style="left:717px;top:357px;width:676px;height:27px;background:#dfe6fb;"></div>
<div style="left:697px;top:357px;width:19px;height:27px;background:#f4f4f7;"></div>
<div style="left:716px;top:333px;width:1px;height:51px;background:#cbcbd4;"></div>
<div style="left:914px;top:333px;width:1px;height:51px;background:#cbcbd4;"></div>
<div class="t" style="top:334.0px;font-size:13.5px;line-height:20px;color:#20203c;letter-spacing:-0.32px;left:722px;">Code</div>
<div style="left:1101px;top:333px;width:1px;height:51px;background:#cbcbd4;"></div>
<div class="t" style="top:334.0px;font-size:13.5px;line-height:20px;color:#20203c;letter-spacing:-0.048px;left:920px;">Description</div>
<div style="left:1195px;top:333px;width:1px;height:51px;background:#cbcbd4;"></div>
<div class="t" style="top:334.0px;font-size:13.5px;line-height:20px;color:#20203c;letter-spacing:-0.257px;left:1107px;">SLAType</div>
<div style="left:1273px;top:333px;width:1px;height:51px;background:#cbcbd4;"></div>
<div class="t" style="top:334.0px;font-size:13.5px;line-height:20px;color:#20203c;letter-spacing:0.215px;left:1201px;">Quantity</div>
<div style="left:1393px;top:333px;width:1px;height:51px;background:#cbcbd4;"></div>
<div class="t" style="top:334.0px;font-size:13.5px;line-height:20px;color:#20203c;letter-spacing:0.067px;left:1279px;">FeeType</div>
<div style="left:915px;top:357px;width:186px;height:27px;box-sizing:border-box;border:1px dotted #30303c;background:#fff;"></div>
<svg style="left:702px;top:338px" width="10" height="11" viewBox="0 0 10 11"><circle cx="3.8" cy="3.8" r="2.6" fill="#fff" stroke="#3c3c4a" stroke-width="1.3"/><path d="M5.8 6 L8.8 9.6" stroke="#3c3c4a" stroke-width="1.8" stroke-linecap="round"/></svg>
<svg style="left:704px;top:365px" width="7" height="10" viewBox="0 0 7 10"><polygon points="0.8,0.6 6,5 0.8,9.4" fill="#20203c"/></svg>
<div style="left:649px;top:390px;width:1246px;height:1px;background:#cbcbd4;"></div>
<div style="left:695px;top:390px;width:1200px;height:1px;background:#a2a2ae;"></div>
<div style="left:1894px;top:303px;width:1px;height:88px;background:#a2a2ae;"></div>
<div style="left:649px;top:391px;width:19px;height:25px;background:#f3f3f6;"></div>
<div style="left:669px;top:391px;width:535px;height:25px;background:#20b2aa;"></div>
<div style="left:1204px;top:391px;width:691px;height:25px;background:#ffffe0;"></div>
<div style="left:668px;top:391px;width:1px;height:25px;background:#cbcbd4;"></div>
<div style="left:761px;top:391px;width:1px;height:25px;background:#cbcbd4;"></div>
<div style="left:921px;top:391px;width:1px;height:25px;background:#cbcbd4;"></div>
<div style="left:1015px;top:391px;width:1px;height:25px;background:#cbcbd4;"></div>
<div style="left:1109px;top:391px;width:1px;height:25px;background:#cbcbd4;"></div>
<div style="left:1203px;top:391px;width:1px;height:25px;background:#cbcbd4;"></div>
<div style="left:1424px;top:391px;width:1px;height:25px;background:#cbcbd4;"></div>
<div style="left:1633px;top:391px;width:1px;height:25px;background:#cbcbd4;"></div>
<div style="left:1726px;top:391px;width:1px;height:25px;background:#cbcbd4;"></div>
<div style="left:1820px;top:391px;width:1px;height:25px;background:#cbcbd4;"></div>
<div style="left:649px;top:416px;width:1246px;height:1px;background:#cbcbd4;"></div>
<svg style="left:653px;top:399px" width="10" height="10" viewBox="0 0 10 10"><path d="M5 0.8 V9.2 M0.8 5 H9.2 M2 2 L8 8 M8 2 L2 8" stroke="#30303c" stroke-width="1.3"/></svg>
<div style="left:649px;top:936px;width:1246px;height:1px;background:#d2d2d9;"></div>
<div style="left:649px;top:937px;width:1246px;height:37px;background:linear-gradient(#ececf0,#e5e5ea);"></div>
<div style="left:649px;top:974px;width:1246px;height:21px;background:#f5f5f8;"></div>
<div style="left:670px;top:980px;width:860px;height:9px;box-sizing:border-box;border:1px solid #b6b6c0;border-radius:4.5px;background:linear-gradient(#f0f0f4,#dcdce3);"></div>
<svg style="left:655px;top:979px" width="6" height="10" viewBox="0 0 6 10"><polygon points="5.4,0.8 5.4,9.2 0.6,5" fill="#7a7a88"/></svg>
<svg style="left:1881px;top:979px" width="6" height="10" viewBox="0 0 6 10"><polygon points="0.6,0.8 0.6,9.2 5.4,5" fill="#5a5a68"/></svg>
<div style="left:1064px;top:375px;width:220px;height:318px;box-sizing:border-box;border:1px solid #8e8e9a;background:#fff;box-shadow:2px 2px 2px rgba(0,0,0,.5),3px 3px 4px rgba(0,0,0,.2);"></div>
<div style="left:1065px;top:376px;width:218px;height:28px;background:linear-gradient(#f6f6f8,#efeff3);"></div>
<div style="left:1066px;top:404px;width:194px;height:1px;background:#e2e2e8;"></div>
<div style="left:1260px;top:376px;width:23px;height:316px;background:linear-gradient(90deg,#f0f0f4,#f6f6f8);"></div>
<svg style="left:1267px;top:385px" width="8" height="5" viewBox="0 0 8 5"><polygon points="0.5,4.5 7.5,4.5 4,0.5" fill="#c0c0ca"/></svg>
<svg style="left:1267px;top:678px" width="8" height="5" viewBox="0 0 8 5"><polygon points="0.5,0.5 7.5,0.5 4,4.5" fill="#c0c0ca"/></svg>
<div class="t" style="top:381.0px;font-size:13.5px;line-height:20px;color:#8c8c9a;letter-spacing:-0.254px;left:1074px;">Process</div>
<div class="t" style="top:411.7px;font-size:13.8px;line-height:20px;color:#1c1c38;letter-spacing:0.914px;font-weight:bold;left:1105px;">Part</div>
<div class="t" style="top:427.7px;font-size:13.5px;line-height:20px;color:#20203c;letter-spacing:-0.031px;left:1105px;">Add Part Inclusion</div>
<div class="t" style="top:459.3px;font-size:13.8px;line-height:20px;color:#1c1c38;letter-spacing:-0.234px;font-weight:bold;left:1105px;">BOM</div>
<div class="t" style="top:475.3px;font-size:13.5px;line-height:20px;color:#20203c;letter-spacing:-0.268px;left:1105px;">Add BOM Inclusion</div>
<div class="t" style="top:507.0px;font-size:13.8px;line-height:20px;color:#1c1c38;letter-spacing:0.659px;font-weight:bold;left:1105px;">Craft</div>
<div class="t" style="top:523.0px;font-size:13.5px;line-height:20px;color:#20203c;letter-spacing:0.049px;left:1105px;">Add Craft Inclusion</div>
<div class="t" style="top:554.6px;font-size:13.8px;line-height:20px;color:#1c1c38;letter-spacing:0.627px;font-weight:bold;left:1105px;">Service</div>
<div class="t" style="top:570.6px;font-size:13.5px;line-height:20px;color:#20203c;letter-spacing:-0.135px;left:1105px;">Add Service Inclusion</div>
<div class="t" style="top:602.2px;font-size:13.8px;line-height:20px;color:#9a9aa8;letter-spacing:0.93px;font-weight:bold;left:1105px;">Delete</div>
<div class="t" style="top:618.2px;font-size:13.5px;line-height:20px;color:#a2a2b0;letter-spacing:-0.066px;left:1105px;">Delete Inclusion</div>
<div class="t" style="top:649.9px;font-size:13.8px;line-height:20px;color:#9a9aa8;letter-spacing:0.252px;font-weight:bold;left:1105px;">Link Fee</div>
<div class="t" style="top:665.9px;font-size:13.5px;line-height:20px;color:#a2a2b0;letter-spacing:-0.1px;left:1105px;">Link Fee to this Inclusion</div>
<div style="left:1066px;top:454px;width:216px;height:53px;box-sizing:border-box;border:2px solid #3f5fd6;border-radius:1px;"></div>
<svg style="left:1077.6px;top:418.8px" width="22" height="22" viewBox="0 0 22 22"><g fill="none" stroke="#8f9bb2" stroke-width="2" stroke-dasharray="1.7 1.1"><circle cx="7.2" cy="7" r="4.3"/><circle cx="15.2" cy="14.4" r="3.5"/></g><g fill="#eef0f4" stroke="#8f9bb2" stroke-width="1"><circle cx="7.2" cy="7" r="3.3"/><circle cx="15.2" cy="14.4" r="2.6"/></g><circle cx="7.2" cy="7" r="1.2" fill="#fff" stroke="#7d89a2" stroke-width=".8"/><circle cx="15.2" cy="14.4" r="1" fill="#fff" stroke="#7d89a2" stroke-width=".8"/></svg>
<svg style="left:1078px;top:467px" width="20" height="20" viewBox="0 0 20 20"><rect x="1" y="1.5" width="17" height="16.5" fill="#f6c64a" stroke="#c8922a" stroke-width="1"/><rect x="1.5" y="2" width="16" height="3.4" fill="#f2b032"/><path d="M2 8 H17 M2 11 H17 M2 14 H17" stroke="#fbe29a" stroke-width="1.2"/><rect x="17.5" y="5" width="1.5" height="14" fill="#b8b8c0"/><rect x="3" y="18" width="16" height="1.4" fill="#b8b8c0"/><circle cx="10.5" cy="3.8" r="1.8" fill="#3a6ad0"/></svg>
<svg style="left:1077px;top:514px" width="22" height="20" viewBox="0 0 22 20"><path d="M7 16 C7 12 9 10.5 13.5 10.5 C18 10.5 20 12 20 16 Z" fill="#e88a2a" stroke="#b4621a" stroke-width=".8"/><circle cx="13.5" cy="6.8" r="3.4" fill="#f0c090" stroke="#a8743c" stroke-width=".8"/><path d="M10.2 5.6 C10.6 3 16.4 3 16.8 5.6 Z" fill="#8a5a2a"/><path d="M1 11.5 L5.5 8 L5.5 10 L10 10 L10 13 L5.5 13 L5.5 15 Z" fill="#4ab83a" stroke="#2a8a22" stroke-width=".8"/><ellipse cx="13" cy="17" rx="8" ry="1.4" fill="#c8c8d0" opacity=".7"/></svg>
<svg style="left:1078px;top:561px" width="20" height="22" viewBox="0 0 20 22"><rect x="2.2" y="3" width="2.4" height="17" rx=".6" fill="#36466e"/><path d="M4.8 4 C8 2.6 10.5 7.2 18.6 5.6 C15.4 7.4 14.6 10.4 11 11.6 C8.6 12.4 6.8 11.4 4.8 12.6 Z" fill="#64a22c" stroke="#3e7e1c" stroke-width=".7"/><path d="M5.4 5.2 C8 4.6 9.8 7.6 14.4 7.2 C12 8.4 10.6 10 8.4 10.4 C7 10.6 6.2 10.4 5.4 10.8 Z" fill="#a4d460" opacity=".75"/></svg>
<svg style="left:1078px;top:610px" width="20" height="20" viewBox="0 0 20 20"><circle cx="10" cy="10" r="8.6" fill="#b4b4ba" stroke="#a0a0a8" stroke-width="1"/><path d="M7 7 L13 13 M13 7 L7 13" stroke="#ececf0" stroke-width="2.2" stroke-linecap="round"/></svg>
<svg style="left:1077px;top:656px" width="22" height="20" viewBox="0 0 22 20"><rect x="8" y="2" width="6.5" height="16" rx="1" fill="#c4c4ca" stroke="#a8a8b0" stroke-width=".8"/><polygon points="2,6.5 6,10 2,13.5" fill="#b0b0b8"/><polygon points="20,6.5 16,10 20,13.5" fill="#b0b0b8"/></svg>
<div style="left:0px;top:996px;width:1921px;height:1px;background:#eaeaee;"></div>
<div style="left:0px;top:997px;width:1921px;height:32px;background:linear-gradient(#dcdce2,#d0d0d8 50%,#c6c6d0);"></div>
<div class="t" style="top:1003.5px;font-size:13.5px;line-height:20px;color:#20203c;letter-spacing:-0.212px;left:9px;">Open Windows</div>
<svg style="left:103px;top:1011px" width="9" height="5" viewBox="0 0 9 5"><polygon points="0.3,0 8.7,0 4.5,4.6" fill="#20203c"/></svg>
<div style="left:1471px;top:1000px;width:1px;height:27px;background:linear-gradient(rgba(176,176,186,0),#aeaeb8 25%,#aeaeb8 75%,rgba(176,176,186,0));"></div>
<div style="left:1472px;top:1000px;width:1px;height:27px;background:linear-gradient(rgba(236,236,240,0),#e8e8ee 25%,#e8e8ee 75%,rgba(236,236,240,0));"></div>
<div style="left:1574px;top:1000px;width:1px;height:27px;background:linear-gradient(rgba(176,176,186,0),#aeaeb8 25%,#aeaeb8 75%,rgba(176,176,186,0));"></div>
<div style="left:1575px;top:1000px;width:1px;height:27px;background:linear-gradient(rgba(236,236,240,0),#e8e8ee 25%,#e8e8ee 75%,rgba(236,236,240,0));"></div>
<div style="left:1665px;top:1000px;width:1px;height:27px;background:linear-gradient(rgba(176,176,186,0),#aeaeb8 25%,#aeaeb8 75%,rgba(176,176,186,0));"></div>
<div style="left:1666px;top:1000px;width:1px;height:27px;background:linear-gradient(rgba(236,236,240,0),#e8e8ee 25%,#e8e8ee 75%,rgba(236,236,240,0));"></div>
<div style="left:1787px;top:1000px;width:1px;height:27px;background:linear-gradient(rgba(176,176,186,0),#aeaeb8 25%,#aeaeb8 75%,rgba(176,176,186,0));"></div>
<div style="left:1788px;top:1000px;width:1px;height:27px;background:linear-gradient(rgba(236,236,240,0),#e8e8ee 25%,#e8e8ee 75%,rgba(236,236,240,0));"></div>
<div class="t" style="top:1003.5px;font-size:13.5px;line-height:20px;color:#20203c;letter-spacing:-0.157px;left:1484px;">User : Bianca</div>
<div class="t" style="top:1003.5px;font-size:13.5px;line-height:20px;color:#20203c;letter-spacing:0.342px;left:1584px;">03/02/2023</div>
<div class="t" style="top:1003.5px;font-size:13.5px;line-height:20px;color:#20203c;letter-spacing:0.26px;left:1675px;">Version : 2.5.1.4</div>
<div class="t" style="top:1003.5px;font-size:13.5px;line-height:20px;color:#20203c;letter-spacing:-0.204px;left:1797px;">Example Company</div>
<div style="left:1920px;top:0px;width:1px;height:56px;background:#2a2a30;"></div>
<div style="left:1920px;top:56px;width:1px;height:973px;background:#c8c8cc;"></div>
<div style="left:1920px;top:147px;width:1px;height:870px;background:#3a3a3e;"></div>
</div></body></html>
